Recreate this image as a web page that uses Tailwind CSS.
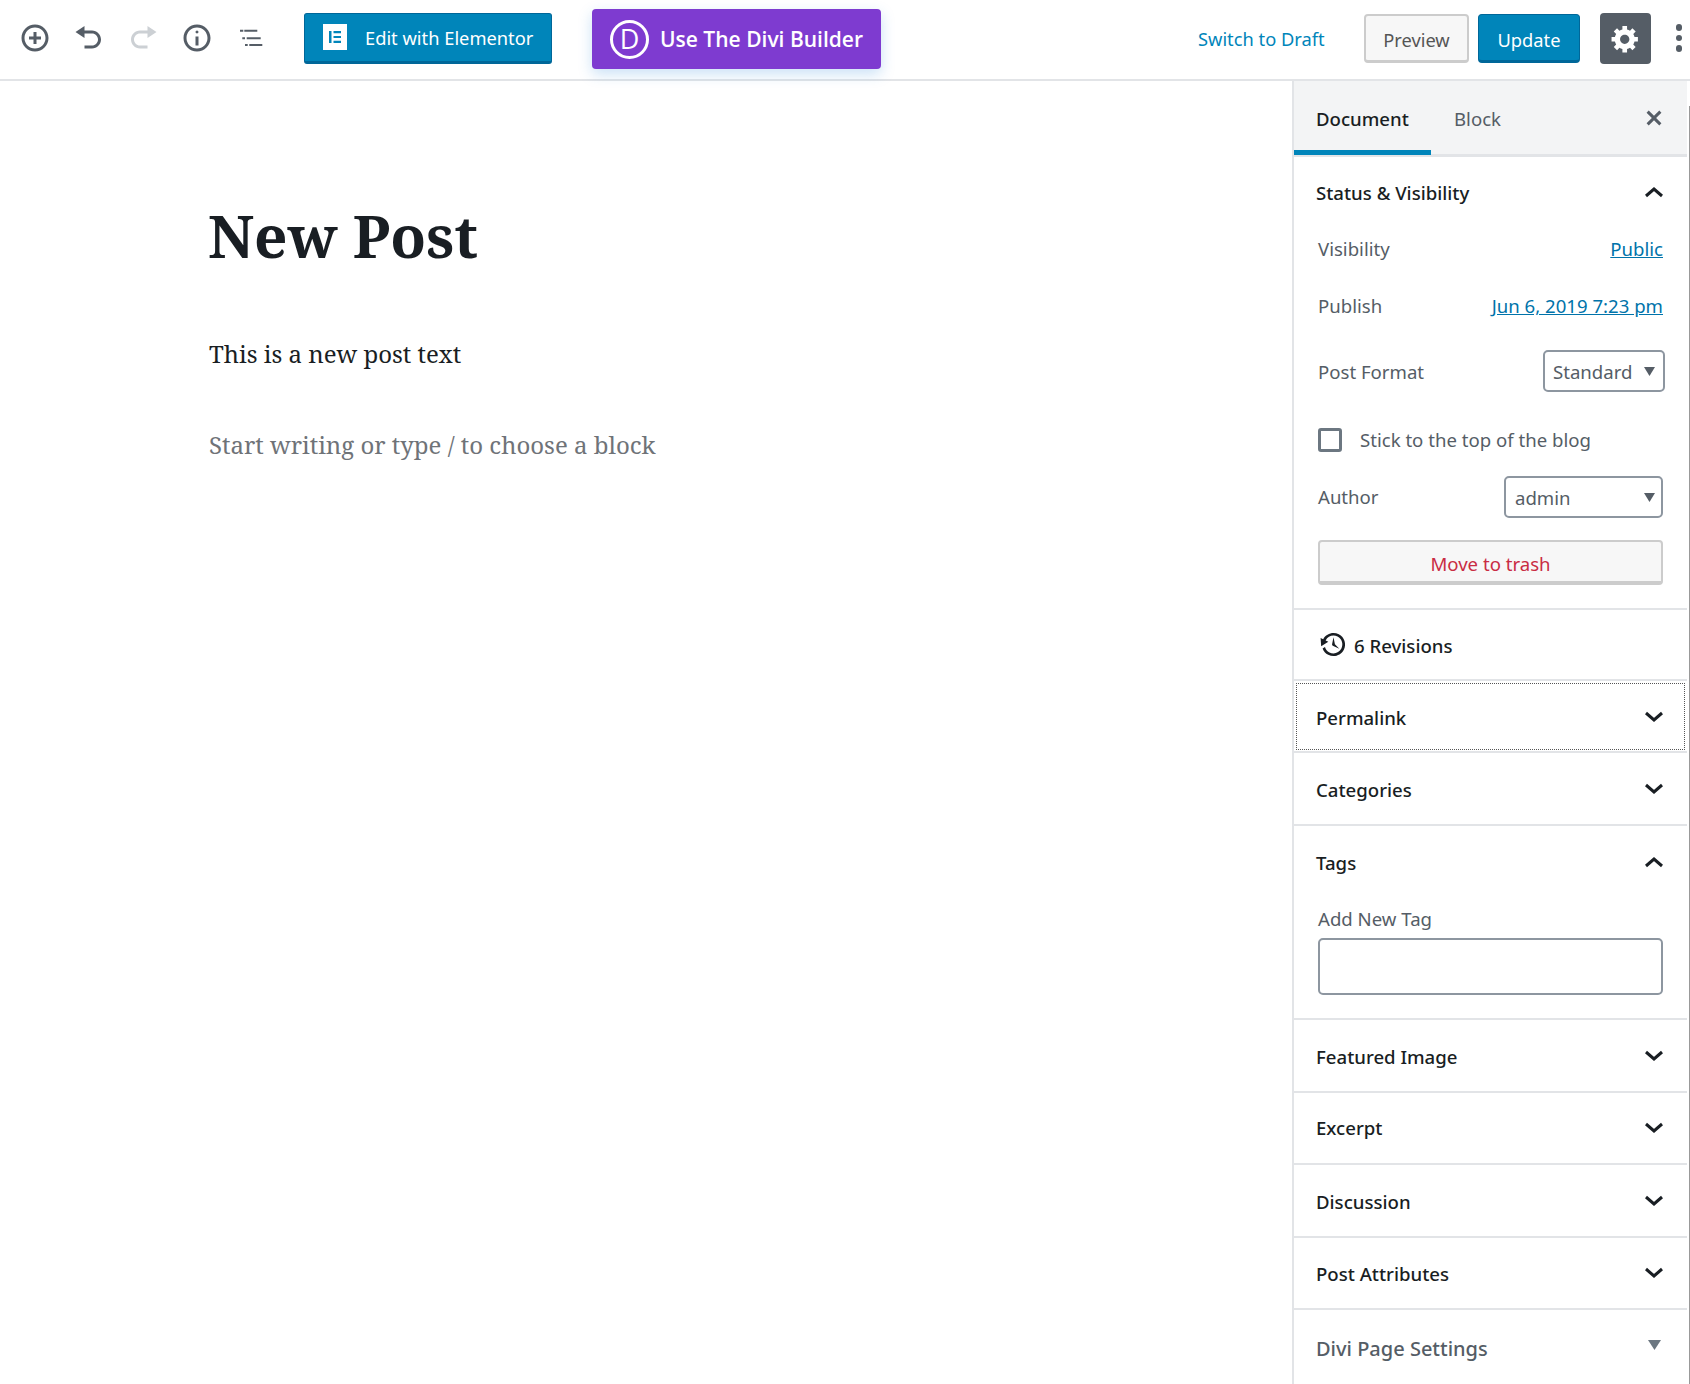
<!DOCTYPE html>
<html><head><meta charset="utf-8"><title>New Post</title>
<script src="https://cdn.jsdelivr.net/npm/@tailwindcss/browser@4"></script></head>
<body class="bg-white">
<div class="w-[1690px] h-[1384px] overflow-hidden flex flex-col font-['Noto_Sans',sans-serif] text-[18.6px] text-[#191e23]">
<header class="h-[81px] shrink-0 border-b-2 border-[#e2e4e7] flex items-center relative">
  <div class="flex items-center w-[304px] pl-[8px] mb-[3px] text-[#555d66]">
    <button class="w-[54px] h-[54px] flex items-center justify-center"><svg class="w-[30px] h-[30px]" viewBox="0 0 20 20" fill="currentColor"><path d="M10 1c-5 0-9 4-9 9s4 9 9 9 9-4 9-9-4-9-9-9zm0 16c-3.9 0-7-3.1-7-7s3.1-7 7-7 7 3.1 7 7-3.1 7-7 7zm1-11H9v3H6v2h3v3h2v-3h3V9h-3V6z"/></svg></button>
    <button class="w-[54px] h-[54px] flex items-center justify-center"><svg class="w-[30px] h-[30px]" viewBox="0 0 20 20" fill="currentColor"><path d="M12 5H7V2L1 6l6 4V7h5c2.2 0 4 1.8 4 4s-1.800 4-4 4H7v2h5c3.300 0 6-2.700 6-6s-2.700-6-6-6z"/></svg></button>
    <button class="w-[54px] h-[54px] flex items-center justify-center text-[#ccd0d4]"><svg class="w-[30px] h-[30px]" viewBox="0 0 20 20" fill="currentColor"><path d="M8 5h5V2l6 4-6 4V7H8c-2.200 0-4 1.800-4 4s1.800 4 4 4h5v2H8c-3.300 0-6-2.700-6-6s2.700-6 6-6z"/></svg></button>
    <button class="w-[54px] h-[54px] flex items-center justify-center"><svg class="w-[30px] h-[30px]" viewBox="0 0 20 20" fill="currentColor"><path d="M9 15h2V9H9v6zm1-10c-.5 0-1 .5-1 1s.5 1 1 1 1-.5 1-1-.5-1-1-1zm0-4c-5 0-9 4-9 9s4 9 9 9 9-4 9-9-4-9-9-9zm0 16c-3.900 0-7-3.100-7-7s3.100-7 7-7 7 3.100 7 7-3.100 7-7 7z"/></svg></button>
    <button class="w-[54px] h-[54px] flex items-center justify-center"><svg class="w-[30px] h-[30px]" viewBox="0 0 30 30" fill="currentColor"><path d="M4 6.700h3.300v2H4zM8.300 6.700h13v2h-13zM6.300 14.300h2.700v2H6.300zM10.700 14.300h14v2h-14zM9 21h2.700v2H9zM13.300 21h13v2h-13z"/></svg></button>
  </div>
  <a class="w-[248px] h-[51px] mt-[-3px] rounded-[3px] bg-[#0085ba] border border-[#006799] border-b-[3px] flex items-center text-white text-[18.3px] pl-[18px]">
    <span class="w-[24px] h-[26px] bg-white flex items-center justify-center mr-[18px]"><svg class="w-[14px] h-[14px]" viewBox="0 0 14 14" fill="#0085ba"><path d="M1 1h2.500v12H1zM5.500 1H13v2.200H5.500zM5.500 5.900H13v2.200H5.500zM5.500 10.800H13V13H5.500z"/></svg></span>
    <span class="pt-[2px]">Edit with Elementor</span>
  </a>
  <a class="ml-[40px] w-[289px] h-[60px] mt-[-1px] rounded-[4px] bg-[#7e3bd0] shadow-[0_5px_14px_rgba(43,135,218,0.25)] flex items-center text-white font-['Open_Sans',sans-serif] font-semibold text-[21px] pl-[18px]">
    <span class="w-[39px] h-[39px] rounded-full border-[3px] border-white flex items-center justify-center font-normal text-[27px] mr-[11px]">D</span>
    <span class="pt-[2px]">Use The Divi Builder</span>
  </a>
  <a class="ml-[317px] w-[127px] mb-[2px] whitespace-nowrap text-[#0085ba] text-[18.3px]">Switch to Draft</a>
  <button class="ml-[39px] w-[105px] h-[49px] mb-[2px] pt-[4px] rounded-[4px] bg-[#f7f7f7] border-2 border-[#ccc] border-b-[3px] text-[#555] text-[18.3px]">Preview</button>
  <button class="ml-[9px] w-[102px] h-[49px] mb-[2px] pt-[4px] rounded-[4px] bg-[#0085ba] border border-[#006799] border-b-[3px] text-white text-[18.3px]">Update</button>
  <button class="ml-[20px] w-[51px] h-[51px] mb-[2px] rounded-[4px] bg-[#555d66] flex items-center justify-center"><svg class="w-[31px] h-[31px]" viewBox="0 0 20 20" fill="#fff"><path d="M18 12h-2.180c-.17.7-.44 1.350-.81 1.930l1.540 1.540-2.100 2.100-1.540-1.540c-.58.36-1.230.63-1.910.79V19H8v-2.180c-.68-.16-1.330-.43-1.910-.79l-1.540 1.540-2.120-2.120 1.540-1.540c-.36-.58-.63-1.230-.79-1.910H1V9.030h2.170c.16-.7.44-1.350.8-1.940L2.430 5.550l2.100-2.100 1.540 1.540c.58-.37 1.240-.64 1.930-.81V2h3v2.180c.68.16 1.330.43 1.910.79l1.540-1.540 2.120 2.120-1.540 1.540c.36.59.64 1.240.8 1.940H18V12zm-8.500 1.500c1.660 0 3-1.340 3-3s-1.340-3-3-3-3 1.340-3 3 1.340 3 3 3z"/></svg></button>
  <div class="ml-[25px] mb-[3px] flex flex-col gap-[4px] w-[6px]"><i class="block w-[6px] h-[6.500px] rounded-full bg-[#555d66]"></i><i class="block w-[6px] h-[6.500px] rounded-full bg-[#555d66]"></i><i class="block w-[6px] h-[6.500px] rounded-full bg-[#555d66]"></i></div>
</header>
<div class="flex flex-1 min-h-0">
  <main class="w-[1292px] shrink-0 pl-[209px] font-['Noto_Serif','Liberation_Serif',serif]">
    <h1 class="font-bold text-[58.5px] leading-[70px] mt-[119px] ml-[-1px] text-[#191e23]">New Post</h1>
    <p class="text-[24px] leading-[32px] mt-[68px] text-[#191e23]">This is a new post text</p>
    <p class="text-[24px] leading-[32px] mt-[59px] text-[#6f7378]">Start writing or type / to choose a block</p>
  </main>
  <aside class="flex-1 flex border-l-2 border-[#e2e4e7] min-w-0">
    <div class="w-[393px] shrink-0">
      <div class="h-[76px] bg-[#f3f4f5] border-b-[3px] border-[#e2e4e7] flex relative">
        <div class="w-[137px] h-[74px] border-b-[5px] border-[#0085ba] flex items-center pl-[22px] pt-[6px] font-medium">Document</div>
        <div class="h-[74px] flex items-center pl-[23px] pt-[2px] text-[#555d66]">Block</div>
        <svg class="ml-auto mr-[18px] mt-[22px] w-[30px] h-[30px]" viewBox="0 0 20 20" fill="#555d66"><path d="M14.950 6.460L11.410 10l3.540 3.540-1.410 1.410L10 11.420l-3.530 3.530-1.420-1.420L8.580 10 5.050 6.470l1.420-1.420L10 8.580l3.540-3.530z"/></svg>
      </div>
      <section class="h-[453px] border-b-2 border-[#e2e4e7] pl-[22px] pr-[24px] text-[#555d66]">
        <div class="h-[72px] flex items-center justify-between font-medium text-[#191e23]"><span>Status &amp; Visibility</span><svg class="w-[18px] h-[12px] mb-[2px]" viewBox="0 0 18 12" fill="none" stroke="#191e23" stroke-width="3"><path d="M1 10l8-7 8 7"/></svg></div>
        <div class="pl-[2px] flex justify-between items-center h-[28px] mt-[6px]"><span>Visibility</span><a class="text-[#0073aa] underline">Public</a></div>
        <div class="pl-[2px] flex justify-between items-center h-[28px] mt-[29px]"><span>Publish</span><a class="text-[#0073aa] underline">Jun 6, 2019 7:23 pm</a></div>
        <div class="pl-[2px] flex justify-between items-center h-[42px] mt-[30px] mr-[-2px]"><span class="pt-[2px]">Post Format</span><span class="w-[122px] h-[42px] border-2 border-[#8d96a0] rounded-[5px] flex items-center justify-between pl-[8px] pr-[8px]"><span class="pt-[2px]">Standard</span><svg class="w-[11px] h-[9px]" viewBox="0 0 11 9" fill="#555d66"><path d="M0 0h11L5.500 9z"/></svg></span></div>
        <div class="pl-[2px] flex items-center h-[24px] mt-[36px]"><span class="w-[24px] h-[24px] border-[3px] border-[#6c7781] rounded-[3px] mr-[18px]"></span>Stick to the top of the blog</div>
        <div class="pl-[2px] flex justify-between items-center h-[42px] mt-[24px]"><span>Author</span><span class="w-[159px] h-[42px] border-2 border-[#8d96a0] rounded-[5px] flex items-center justify-between pl-[9px] pr-[6px]"><span class="pt-[2px]">admin</span><svg class="w-[11px] h-[9px]" viewBox="0 0 11 9" fill="#555d66"><path d="M0 0h11L5.500 9z"/></svg></span></div>
        <button class="ml-[2px] w-[345px] h-[45px] mt-[22px] pt-[4px] block rounded-[4px] bg-[#f7f7f7] border-2 border-[#ccc] border-b-[4px] text-[#c92c43]">Move to trash</button>
      </section>
      <div class="h-[71px] border-b-2 border-[#e2e4e7] flex items-center pl-[25px] font-medium">
        <svg class="w-[29px] h-[29px] mr-[6px]" viewBox="0 0 20 20" fill="#191e23"><path d="M13.650 2.880c3.930 2.010 5.480 6.840 3.470 10.770s-6.830 5.480-10.770 3.470c-1.870-.96-3.200-2.560-3.860-4.400l1.640-1.030c.45 1.570 1.520 2.950 3.080 3.760 3.010 1.540 6.690.35 8.230-2.660 1.550-3.010.36-6.690-2.650-8.240C9.780 3.010 6.100 4.200 4.560 7.210l1.880.97-4.950 3.080-.39-5.820 1.780.91C4.900 2.400 9.750.89 13.650 2.880zm-4.360 7.830C9.110 10.530 9 10.280 9 10c0-.07.03-.12.04-.19h-.01L10 5l.97 4.810L14 13l-4.500-2.120.02-.02c-.08-.04-.16-.09-.23-.15z"/></svg>
        <span class="pt-[2px]">6 Revisions</span>
      </div>
      <div class="h-[72px] border-b-2 border-[#e2e4e7] pt-[2px]"><div class="h-[67px] ml-[2px] mr-[2px] border border-dotted border-[#555] flex items-center justify-between pl-[19px] pr-[21px] font-medium"><span class="pt-[2px]">Permalink</span><svg class="w-[18px] h-[12px]" viewBox="0 0 18 12" fill="none" stroke="#191e23" stroke-width="3"><path d="M1 2l8 7 8-7"/></svg></div></div>
      <div class="h-[73px] border-b-2 border-[#e2e4e7] flex items-center justify-between pl-[22px] pr-[24px] font-medium"><span class="pt-[2px]">Categories</span><svg class="w-[18px] h-[12px]" viewBox="0 0 18 12" fill="none" stroke="#191e23" stroke-width="3"><path d="M1 2l8 7 8-7"/></svg></div>
      <section class="h-[194px] border-b-2 border-[#e2e4e7] pl-[22px] pr-[24px]">
        <div class="h-[72px] flex items-center justify-between font-medium"><span class="pt-[2px]">Tags</span><svg class="w-[18px] h-[12px]" viewBox="0 0 18 12" fill="none" stroke="#191e23" stroke-width="3"><path d="M1 10l8-7 8 7"/></svg></div>
        <div class="ml-[2px] h-[28px] mt-[7px] flex items-center text-[#555d66]">Add New Tag</div>
        <div class="ml-[2px] h-[57px] mt-[5px] border-2 border-[#8d96a0] rounded-[5px]"></div>
      </section>
      <div class="h-[73px] border-b-2 border-[#e2e4e7] flex items-center justify-between pl-[22px] pr-[24px] font-medium"><span class="pt-[2px]">Featured Image</span><svg class="w-[18px] h-[12px]" viewBox="0 0 18 12" fill="none" stroke="#191e23" stroke-width="3"><path d="M1 2l8 7 8-7"/></svg></div>
      <div class="h-[72px] border-b-2 border-[#e2e4e7] flex items-center justify-between pl-[22px] pr-[24px] font-medium"><span>Excerpt</span><svg class="w-[18px] h-[12px]" viewBox="0 0 18 12" fill="none" stroke="#191e23" stroke-width="3"><path d="M1 2l8 7 8-7"/></svg></div>
      <div class="h-[73px] border-b-2 border-[#e2e4e7] flex items-center justify-between pl-[22px] pr-[24px] font-medium"><span class="pt-[2px]">Discussion</span><svg class="w-[18px] h-[12px]" viewBox="0 0 18 12" fill="none" stroke="#191e23" stroke-width="3"><path d="M1 2l8 7 8-7"/></svg></div>
      <div class="h-[72px] border-b-2 border-[#e2e4e7] flex items-center justify-between pl-[22px] pr-[24px] font-medium"><span class="pt-[2px]">Post Attributes</span><svg class="w-[18px] h-[12px]" viewBox="0 0 18 12" fill="none" stroke="#191e23" stroke-width="3"><path d="M1 2l8 7 8-7"/></svg></div>
      <div class="h-[75px] pt-[2px] flex items-center justify-between pl-[22px] pr-[26px] font-medium text-[#555d66] text-[20px]"><span>Divi Page Settings</span><svg class="w-[13px] h-[10px] mb-[7px]" viewBox="0 0 13 10" fill="#6c7781"><path d="M0 0h13L6.500 10z"/></svg></div>
    </div>
    <div class="flex-1 flex justify-end pt-[25px]"><i class="block w-[1px] bg-[#999]"></i></div>
  </aside>
</div>
</div>
</body></html>
